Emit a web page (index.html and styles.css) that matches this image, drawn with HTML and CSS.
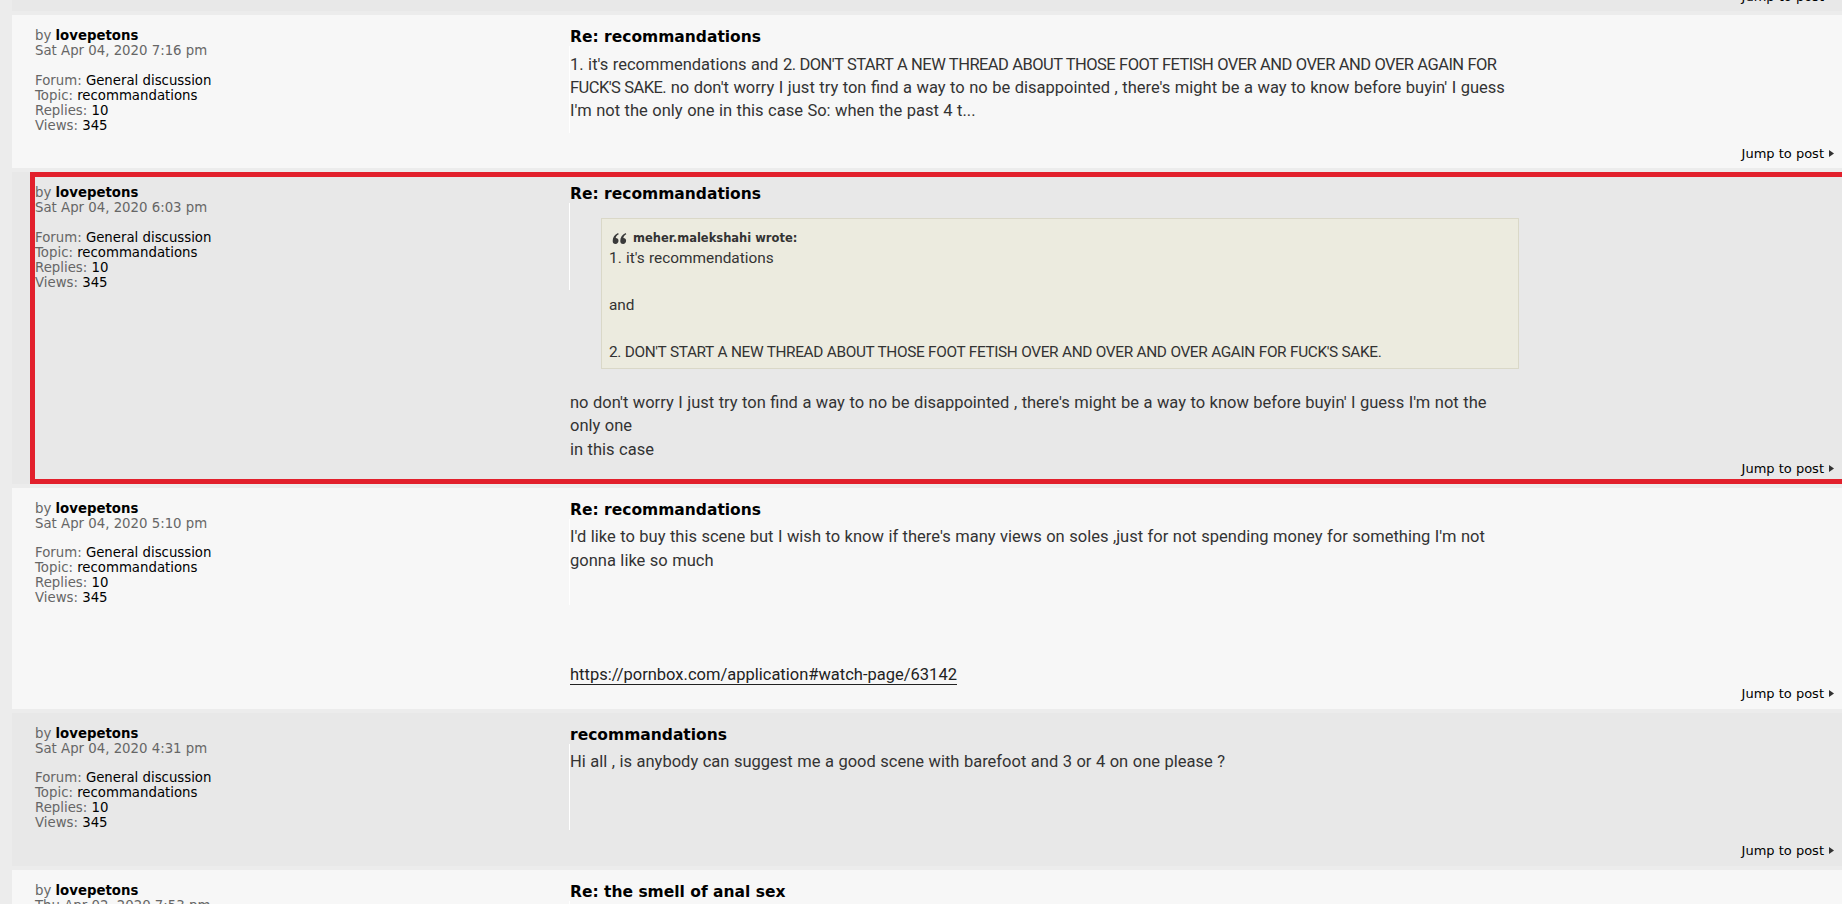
FILE: index.html
```html
<!DOCTYPE html>
<html>
<head>
<meta charset="utf-8">
<title>Search results</title>
<link rel="stylesheet" href="styles.css">
</head>
<body>
<div class="page">
  <div class="post dark stub">
    <div class="jump"><a href="#">Jump to post</a><svg class="arr" width="5" height="7" viewBox="0 0 5 7"><path d="M0 0L5 3.5L0 7Z" fill="#333"/></svg></div>
  </div>

  <div class="post light">
    <div class="row">
      <div class="meta">
        <div>by <b>lovepetons</b></div>
        <div>Sat Apr 04, 2020 7:16 pm</div>
        <div class="info">
          <div>Forum: <span class="v">General discussion</span></div>
          <div>Topic: <span class="v">recommandations</span></div>
          <div>Replies: <span class="v">10</span></div>
          <div>Views: <span class="v">345</span></div>
        </div>
      </div>
      <div class="body">
        <h3>Re: recommandations</h3>
        <div class="content keep">1. it's recommendations and <span class="caps">2. DON'T START A NEW THREAD ABOUT THOSE FOOT FETISH OVER AND OVER AND OVER AGAIN FOR</span><br><span class="caps">FUCK'S SAKE.</span> no don't worry I just try ton find a way to no be disappointed , there's might be a way to know before buyin' I guess<br>I'm not the only one in this case So: when the past 4 t...</div>
      </div>
    </div>
    <div class="jump"><a href="#">Jump to post</a><svg class="arr" width="5" height="7" viewBox="0 0 5 7"><path d="M0 0L5 3.5L0 7Z" fill="#333"/></svg></div>
  </div>

  <div class="post dark">
    <div class="row">
      <div class="meta">
        <div>by <b>lovepetons</b></div>
        <div>Sat Apr 04, 2020 6:03 pm</div>
        <div class="info">
          <div>Forum: <span class="v">General discussion</span></div>
          <div>Topic: <span class="v">recommandations</span></div>
          <div>Replies: <span class="v">10</span></div>
          <div>Views: <span class="v">345</span></div>
        </div>
      </div>
      <div class="body">
        <h3>Re: recommandations</h3>
        <div class="content keep">
          <blockquote class="quote">
            <cite><svg class="qicon" width="15" height="11" viewBox="0 0 13 10"><path d="M0.3 7.2C0.3 4 1.9 1.5 5.2 0L5.8 1.1C4 2.1 3.2 3.2 3.1 4.5C4.6 4.5 5.6 5.5 5.6 7C5.6 8.7 4.4 9.9 2.9 9.9C1.2 9.9 0.3 8.8 0.3 7.2Z M7.2 7.2C7.2 4 8.8 1.5 12.1 0L12.7 1.1C10.9 2.1 10.1 3.2 10 4.5C11.5 4.5 12.5 5.5 12.5 7C12.5 8.7 11.3 9.9 9.8 9.9C8.1 9.9 7.2 8.8 7.2 7.2Z" fill="#3a3a3a"/></svg>meher.malekshahi wrote:</cite>
            <div class="qtext">1. it's recommendations<br><br>and<br><br><span class="caps">2. DON'T START A NEW THREAD ABOUT THOSE FOOT FETISH OVER AND OVER AND OVER AGAIN FOR FUCK'S SAKE.</span></div>
          </blockquote>
          no don't worry I just try ton find a way to no be disappointed , there's might be a way to know before buyin' I guess I'm not the<br>only one<br>in this case
        </div>
      </div>
    </div>
    <div class="jump"><a href="#">Jump to post</a><svg class="arr" width="5" height="7" viewBox="0 0 5 7"><path d="M0 0L5 3.5L0 7Z" fill="#333"/></svg></div>
    <div class="highlight"></div>
  </div>

  <div class="post light">
    <div class="row">
      <div class="meta">
        <div>by <b>lovepetons</b></div>
        <div>Sat Apr 04, 2020 5:10 pm</div>
        <div class="info">
          <div>Forum: <span class="v">General discussion</span></div>
          <div>Topic: <span class="v">recommandations</span></div>
          <div>Replies: <span class="v">10</span></div>
          <div>Views: <span class="v">345</span></div>
        </div>
      </div>
      <div class="body">
        <h3>Re: recommandations</h3>
        <div class="content">I'd like to buy this scene but I wish to know if there's many views on soles ,just for not spending money for something I'm not gonna like so much
          <div class="linkline"><a class="postlink" href="#">https://pornbox.com/application#watch-page/63142</a></div>
        </div>
      </div>
    </div>
    <div class="jump"><a href="#">Jump to post</a><svg class="arr" width="5" height="7" viewBox="0 0 5 7"><path d="M0 0L5 3.5L0 7Z" fill="#333"/></svg></div>
  </div>

  <div class="post dark">
    <div class="row">
      <div class="meta">
        <div>by <b>lovepetons</b></div>
        <div>Sat Apr 04, 2020 4:31 pm</div>
        <div class="info">
          <div>Forum: <span class="v">General discussion</span></div>
          <div>Topic: <span class="v">recommandations</span></div>
          <div>Replies: <span class="v">10</span></div>
          <div>Views: <span class="v">345</span></div>
        </div>
      </div>
      <div class="body">
        <h3>recommandations</h3>
        <div class="content">Hi all , is anybody can suggest me a good scene with barefoot and 3 or 4 on one please ?</div>
      </div>
    </div>
    <div class="jump"><a href="#">Jump to post</a><svg class="arr" width="5" height="7" viewBox="0 0 5 7"><path d="M0 0L5 3.5L0 7Z" fill="#333"/></svg></div>
  </div>

  <div class="post light">
    <div class="row">
      <div class="meta">
        <div>by <b>lovepetons</b></div>
        <div>Thu Apr 02, 2020 7:53 pm</div>
      </div>
      <div class="body">
        <h3>Re: the smell of anal sex</h3>
      </div>
    </div>
  </div>
</div>
</body>
</html>
```

FILE: styles.css
```css
html, body {
  margin: 0;
  overflow: hidden;
  background: #ececec;
}
body {
  font-family: "DejaVu Sans", Verdana, sans-serif;
  font-size: 13px;
  color: #333;
}
.page {
  padding-left: 12px;
}
.post {
  position: relative;
  margin-bottom: 4px;
  padding: 13px 0 7.5px 23px;
}
.light { background: #f7f7f7; }
.dark { background: #e8e8e8; }
.stub {
  margin-top: -24.5px;
}
.row {
  display: flex;
  align-items: flex-start;
}
.meta {
  position: relative;
  flex: none;
  width: 535px;
  padding-bottom: 13px;
  font-size: 13.3px;
  line-height: 15px;
  color: #666;
}
.meta::after {
  content: "";
  position: absolute;
  left: 534px;
  top: 18px;
  bottom: 13px;
  width: 1px;
  background: #ffffff;
}
.meta b { color: #000; }
.meta .v { color: #000; }
.meta .info { margin-top: 14.5px; }
.body {
  flex: none;
  width: 950px;
}
.body h3 {
  margin: 0 0 5.5px;
  font-family: "DejaVu Sans", Verdana, sans-serif;
  font-size: 15.5px;
  line-height: 19px;
  font-weight: bold;
  color: #000;
}
.content {
  font-family: Roboto, "Open Sans", sans-serif;
  font-size: 16.5px;
  line-height: 23.4px;
  word-spacing: 0.4px;
  color: #333;
}
.keep {
  white-space: nowrap;
}
.caps {
  letter-spacing: -0.55px;
}
.quote {
  margin: 14px 1px 22px 31px;
  padding: 10px 7px 4px;
  background: #ecebdf;
  border: 1px solid #dad8c8;
}
.quote cite {
  display: flex;
  align-items: center;
  font-family: "DejaVu Sans", Verdana, sans-serif;
  font-style: normal;
  font-weight: bold;
  font-size: 11.5px;
  line-height: 18px;
  word-spacing: 0;
  color: #333;
}
.qtext {
  font-size: 15.4px;
}
.qtext .caps {
  letter-spacing: -0.38px;
}
.qicon {
  margin: 0 6px 0 3px;
}
.linkline {
  margin-top: 91px;
}
.postlink {
  color: #222;
  text-decoration: none;
  border-bottom: 1px solid #222;
}
.jump {
  display: flex;
  justify-content: flex-end;
  align-items: center;
  line-height: 15px;
  padding-right: 8px;
}
.jump a {
  color: #000;
  text-decoration: none;
}
.arr {
  margin-left: 5px;
}
.highlight {
  position: absolute;
  left: 18px;
  right: -12px;
  top: 0;
  bottom: 0;
  border: 5px solid #e2202c;
  pointer-events: none;
}
```
